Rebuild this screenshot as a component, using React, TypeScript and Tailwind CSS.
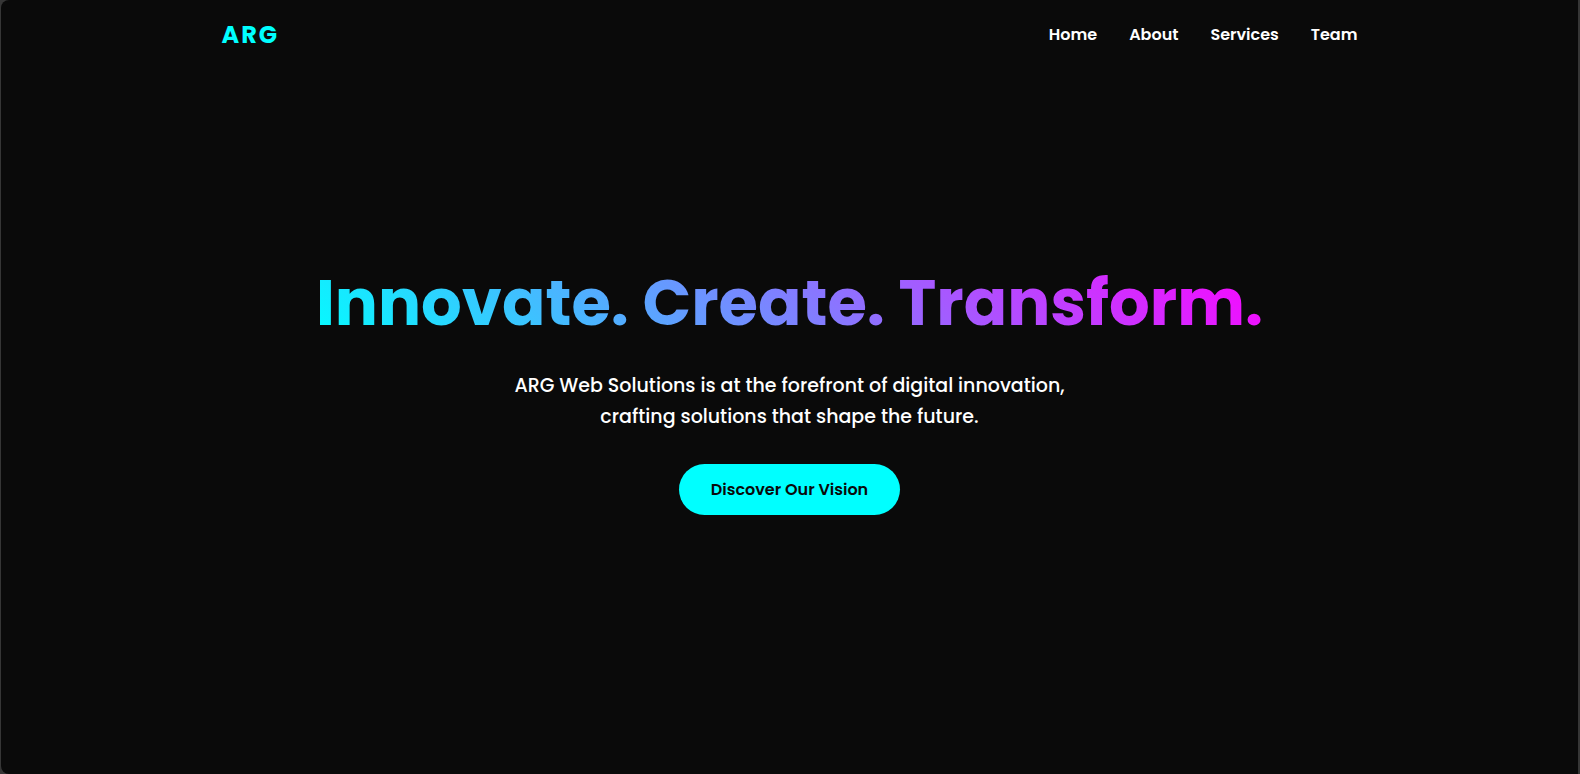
const links = ["Home", "About", "Services", "Team"];

export default function App() {
  return (
    <div className="flex min-h-screen bg-[#363636] pr-0.5 pl-px font-['Poppins','Inter',sans-serif]">
      <div className="flex flex-1 flex-col rounded-l-lg bg-[#0a0a0a] text-white">
        <header className="mx-auto flex h-[70px] w-full max-w-[1200px] items-center justify-between px-8">
          <a href="#home" className="text-2xl font-bold tracking-[2px] text-[#00ffff]">
            ARG
          </a>
          <nav aria-label="Main">
            <ul className="flex gap-8 text-base font-semibold">
              {links.map((link) => (
                <li key={link}>
                  <a href={`#${link.toLowerCase()}`}>{link}</a>
                </li>
              ))}
            </ul>
          </nav>
        </header>
        <main className="flex flex-1 flex-col items-center px-8 pt-[182px] text-center">
          <h1 className="bg-[linear-gradient(45deg,#00ffff,#ff00ff)] bg-clip-text text-[64px] leading-[102px] font-bold text-transparent">
            Innovate. Create. Transform.
          </h1>
          <p className="mt-4 max-w-[600px] text-[19px] leading-[31px] font-medium">
            ARG Web Solutions is at the forefront of digital innovation, crafting solutions that shape the future.
          </p>
          <a
            href="#vision"
            className="mt-8 rounded-full bg-[#00ffff] px-8 py-[13px] text-base leading-[25px] font-semibold text-[#0a0a0a]"
          >
            Discover Our Vision
          </a>
        </main>
      </div>
    </div>
  );
}
